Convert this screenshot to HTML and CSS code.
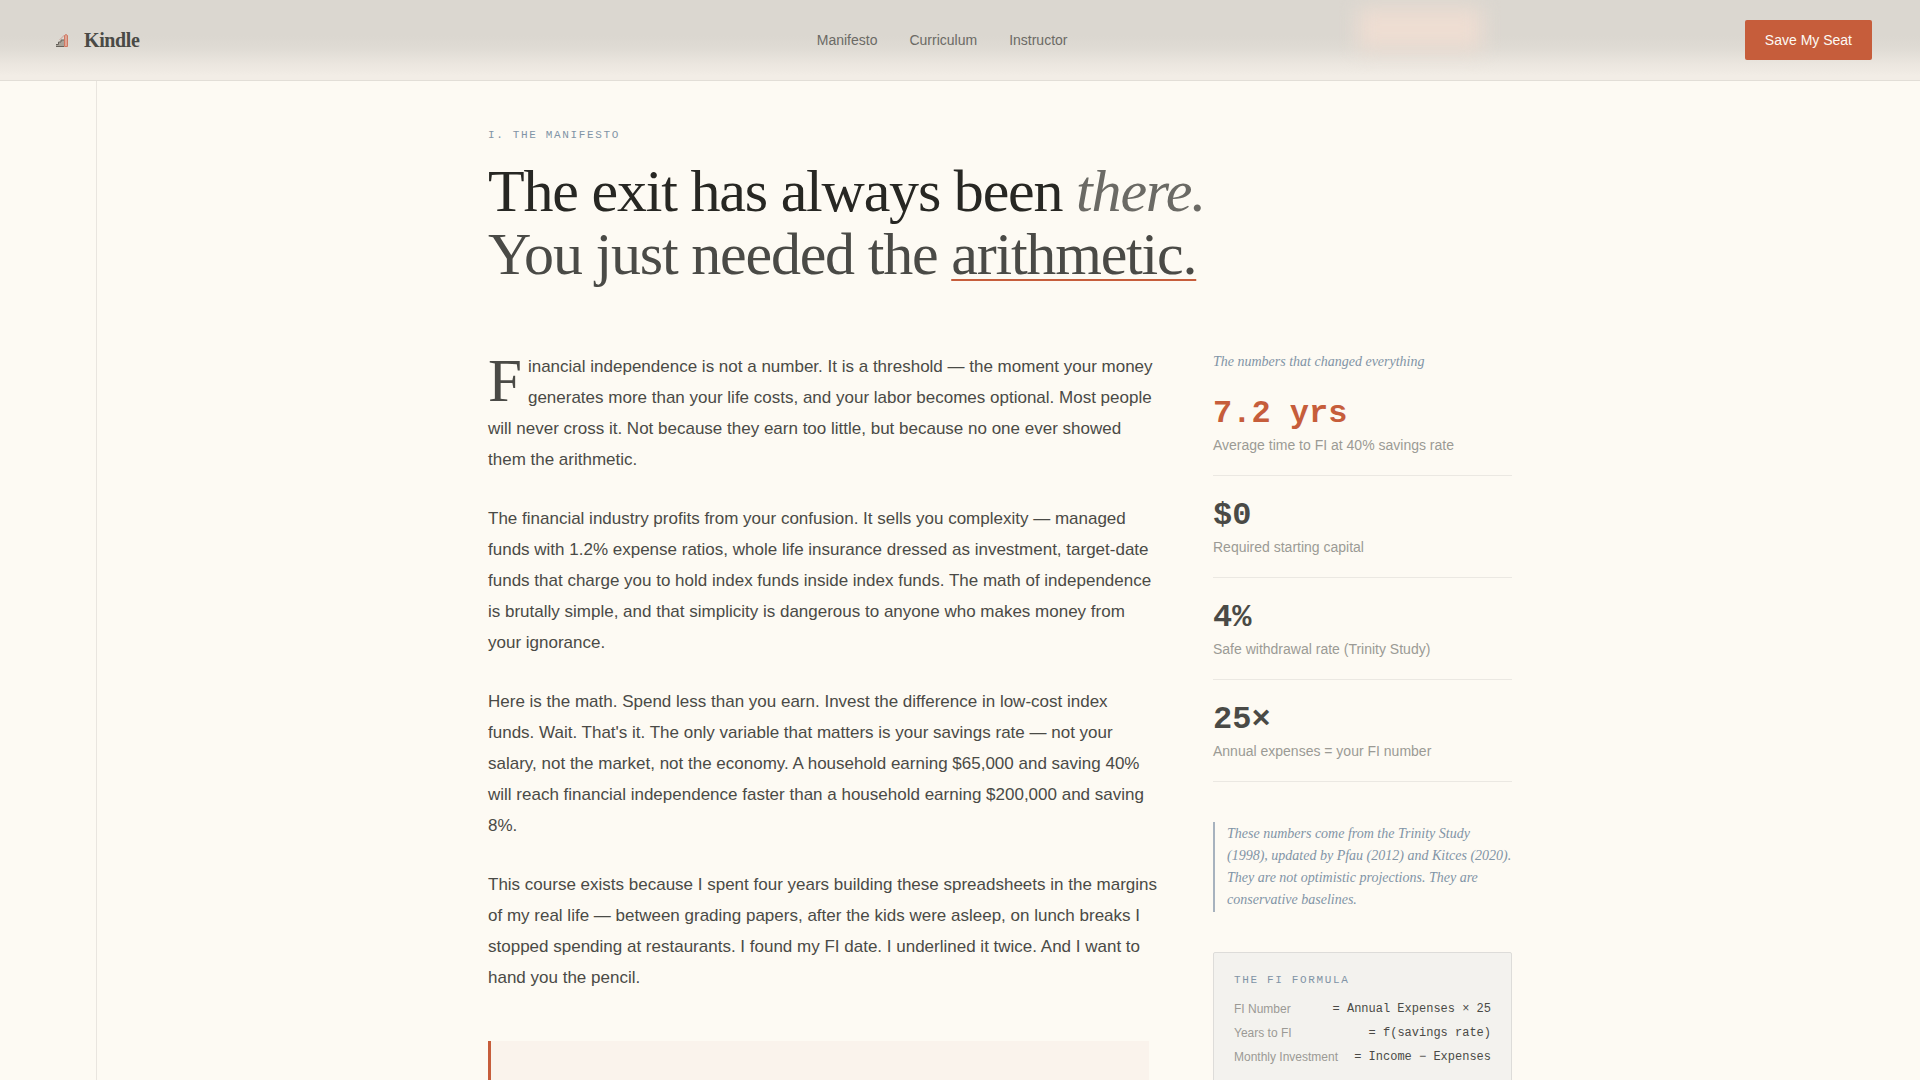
FILE: index.html
```html
<!DOCTYPE html>
<html lang="en">
  <head>
    <meta charset="UTF-8" />
    <meta name="viewport" content="width=device-width, initial-scale=1" />
    <title>Kindle</title>
    <link rel="stylesheet" href="styles.css">
  </head>
  <body>
    <header class="navbar">
      <a class="logo" href="#">
        <svg class="logo-icon" viewBox="0 0 28 28" aria-hidden="true">
          <path d="M8 21v-2.500h2.500V16H13v-2h3.500v7z" fill="#a8a399" />
          <path d="M8 20.500h8M8 18.500h2.500v-2.500H13v-2h3.500" fill="none" stroke="#66625b" stroke-width="1" />
          <path d="M11.500 14l5-5" fill="none" stroke="#c9a095" stroke-width="1" />
          <path d="M16.500 20.500V9.500q1.500-2 3 0v11z" fill="#e0a696" stroke="#cf7862" stroke-width="1" />
        </svg>
        <span>Kindle</span>
      </a>
      <nav class="nav-links">
        <a href="#manifesto">Manifesto</a>
        <a href="#curriculum">Curriculum</a>
        <a href="#instructor">Instructor</a>
      </nav>
      <button class="seat-button" type="button">Save My Seat</button>
    </header>

    <main class="page">
      <section class="manifesto" id="manifesto">
        <p class="eyebrow">I. The Manifesto</p>
        <h1>
          The exit has always been <em>there.</em><br />
          <span class="second-line">You just needed the <u>arithmetic.</u></span>
        </h1>

        <div class="columns">
          <article class="essay">
            <p class="lead">
              Financial independence is not a number. It is a threshold — the moment your money
              generates more than your life costs, and your labor becomes optional. Most people
              will never cross it. Not because they earn too little, but because no one ever showed
              them the arithmetic.
            </p>
            <p>
              The financial industry profits from your confusion. It sells you complexity — managed
              funds with 1.2% expense ratios, whole life insurance dressed as investment, target-date
              funds that charge you to hold index funds inside index funds. The math of independence
              is brutally simple, and that simplicity is dangerous to anyone who makes money from
              your ignorance.
            </p>
            <p>
              Here is the math. Spend less than you earn. Invest the difference in low-cost index
              funds. Wait. That's it. The only variable that matters is your savings rate — not your
              salary, not the market, not the economy. A household earning $65,000 and saving 40%
              will reach financial independence faster than a household earning $200,000 and saving
              8%.
            </p>
            <p>
              This course exists because I spent four years building these spreadsheets in the margins
              of my real life — between grading papers, after the kids were asleep, on lunch breaks I
              stopped spending at restaurants. I found my FI date. I underlined it twice. And I want to
              hand you the pencil.
            </p>
            <div class="callout"></div>
          </article>

          <aside class="sidebar">
            <p class="sidebar-title">The numbers that changed everything</p>
            <div class="stat">
              <div class="stat-value highlight">7.2 yrs</div>
              <div class="stat-label">Average time to FI at 40% savings rate</div>
            </div>
            <div class="stat">
              <div class="stat-value">$0</div>
              <div class="stat-label">Required starting capital</div>
            </div>
            <div class="stat">
              <div class="stat-value">4%</div>
              <div class="stat-label">Safe withdrawal rate (Trinity Study)</div>
            </div>
            <div class="stat">
              <div class="stat-value">25×</div>
              <div class="stat-label">Annual expenses = your FI number</div>
            </div>

            <blockquote class="note">
              These numbers come from the Trinity Study (1998), updated by Pfau (2012) and Kitces
              (2020). They are not optimistic projections. They are conservative baselines.
            </blockquote>

            <div class="formula">
              <h2>The FI Formula</h2>
              <dl>
                <div class="formula-row">
                  <dt>FI Number</dt>
                  <dd>= Annual Expenses × 25</dd>
                </div>
                <div class="formula-row">
                  <dt>Years to FI</dt>
                  <dd>= f(savings rate)</dd>
                </div>
                <div class="formula-row">
                  <dt>Monthly Investment</dt>
                  <dd>= Income − Expenses</dd>
                </div>
              </dl>
            </div>
          </aside>
        </div>
      </section>
    </main>
  </body>
</html>
```
FILE: styles.css
```css
* {
  box-sizing: border-box;
  margin: 0;
  padding: 0;
}

body {
  font-family: "Liberation Sans", Arial, sans-serif;
  color: #4a4a46;
  background: #fdfaf3;
}

a {
  color: inherit;
  text-decoration: none;
}

/* Navigation */
.navbar {
  position: sticky;
  top: 0;
  z-index: 10;
  display: flex;
  align-items: center;
  justify-content: space-between;
  padding: 20px 48px;
  overflow: hidden;
  background: linear-gradient(#dbd7d0 45%, #dfdbd4 60%, #ebe6df 80%, #f2ede6 95%);
  border-bottom: 1px solid #e2ded7;
}

/* soft glow behind the bar */
.navbar::before {
  content: "";
  position: absolute;
  z-index: -1;
  top: 8px;
  left: 1358px;
  width: 124px;
  height: 42px;
  background: #eeddd2;
  filter: blur(10px);
}

.logo {
  display: flex;
  align-items: center;
  gap: 8px;
  font-family: "Liberation Serif", "Times New Roman", serif;
  font-size: 20px;
  font-weight: bold;
  letter-spacing: -0.02em;
}

.logo-icon {
  width: 28px;
  height: 28px;
}

.nav-links {
  display: flex;
  gap: 32px;
  font-size: 14px;
  color: #6b6a65;
}

.seat-button {
  height: 40px;
  padding: 0 20px;
  font-family: inherit;
  font-size: 14px;
  color: #fdfaf3;
  background: #c65d3b;
  border: none;
  border-radius: 2px;
  cursor: pointer;
}

.seat-button:hover {
  background: #b04f30;
}

/* Manifesto */
.page {
  margin-left: 96px;
  padding: 44px 64px 80px 47px;
  border-left: 1px solid #e9e5df;
}

.manifesto {
  max-width: 1024px;
  margin: 0 auto;
}

.eyebrow,
.formula h2 {
  font-family: "Liberation Mono", "Courier New", monospace;
  font-size: 11px;
  font-weight: normal;
  letter-spacing: 0.15em;
  text-transform: uppercase;
  color: #8194a6;
}

.eyebrow {
  line-height: 20px;
  margin-bottom: 15px;
}

h1 {
  font-family: "Liberation Serif", "Times New Roman", serif;
  font-size: 60px;
  font-weight: normal;
  line-height: 63px;
  letter-spacing: -0.02em;
  color: #272723;
}

h1 em {
  color: #6b6a65;
}

.second-line {
  color: #4a4a46;
}

.second-line u {
  text-decoration-color: #c65d3b;
  text-decoration-thickness: 2px;
  text-underline-offset: 5px;
}

.columns {
  display: grid;
  grid-template-columns: minmax(0, 1fr) 299px;
  gap: 55px;
  margin-top: 65px;
}

.essay p {
  font-size: 17px;
  line-height: 31px;
  margin-bottom: 28px;
}

.lead::first-letter {
  float: left;
  padding: 6px 6px 0 0;
  font-family: "Liberation Serif", "Times New Roman", serif;
  font-size: 61px;
  line-height: 48px;
}

.callout {
  min-height: 160px;
  margin: 48px 9px 0 0;
  background: #faf3ec;
  border-left: 3px solid #c65d3b;
}

/* Sidebar */
.sidebar-title,
.note {
  font-family: "Liberation Serif", "Times New Roman", serif;
  font-size: 14px;
  font-style: italic;
  line-height: 22px;
  color: #8194a6;
}

.sidebar-title {
  margin-bottom: 1px;
}

.stat {
  padding: 24px 0 18px;
  border-bottom: 1px solid #ebe8e2;
}

.stat-value {
  font-family: "Liberation Mono", "Courier New", monospace;
  font-size: 32px;
  font-weight: bold;
  line-height: 32px;
}

.stat-value.highlight {
  color: #c65d3b;
}

.stat-label {
  margin-top: 4px;
  font-size: 14px;
  line-height: 23px;
  color: #9b9a95;
}

.note {
  margin-top: 40px;
  padding: 1px 0 1px 12px;
  border-left: 2px solid #a7b2be;
}

.formula {
  margin-top: 40px;
  padding: 20px;
  background: #f3f2ee;
  border: 1px solid #dddcd9;
  border-radius: 2px;
}

.formula h2 {
  line-height: 14px;
  margin-bottom: 14px;
}

.formula-row {
  display: flex;
  align-items: center;
  justify-content: space-between;
  font-size: 12px;
  line-height: 16px;
  margin-bottom: 8px;
}

.formula-row dt {
  color: #9b9a95;
}

.formula-row dd {
  font-family: "Liberation Mono", "Courier New", monospace;
}

@media (max-width: 900px) {
  .page {
    margin-left: 0;
    padding: 32px 24px;
  }

  .columns {
    grid-template-columns: 1fr;
  }

  .nav-links {
    display: none;
  }
}
```
